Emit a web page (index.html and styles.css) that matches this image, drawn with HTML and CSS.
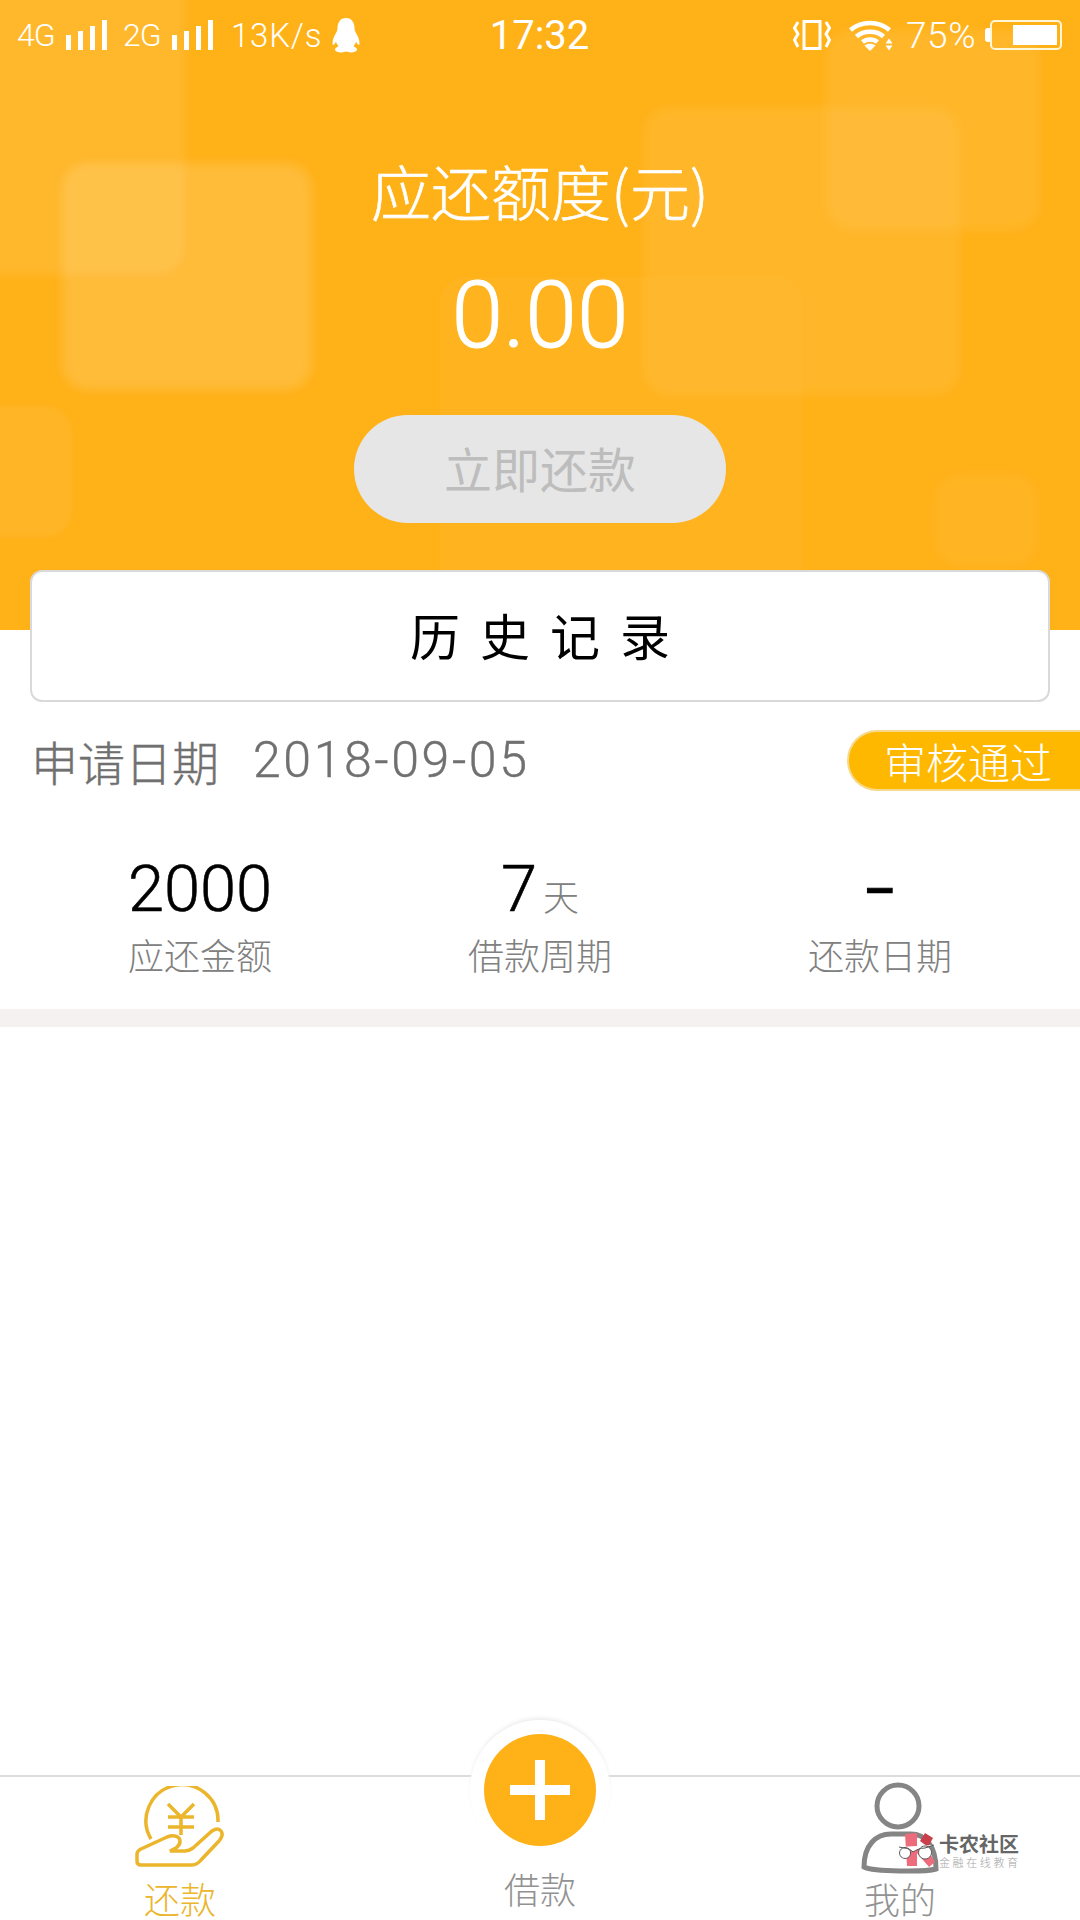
FILE: index.html
```html
<!DOCTYPE html>
<html lang="zh-CN">
<head>
<meta charset="utf-8">
<title>还款</title>
<link rel="stylesheet" href="styles.css">
</head>
<body>
<main class="app">
  <header class="hero">
    <div class="blocks" aria-hidden="true">
      <i class="block block-a"></i><i class="block block-b"></i><i class="block block-c"></i>
      <i class="block block-d"></i><i class="block block-e"></i><i class="block block-f"></i><i class="block block-g"></i>
    </div>
    <div class="status">
      <div class="status-left">
        <span class="net">4G</span>
        <svg class="bars" viewBox="0 0 42 30"><path d="M1 15h5v15H1zM13 11h5v19h-5zM25 6h5v24h-5zM37 0h5v30h-5z"/></svg>
        <span class="net net-2">2G</span>
        <svg class="bars" viewBox="0 0 42 30"><path d="M1 15h5v15H1zM13 11h5v19h-5zM25 6h5v24h-5zM37 0h5v30h-5z"/></svg>
        <span class="speed">13K/s</span>
        <svg class="penguin" viewBox="0 0 28 35"><path d="M14 0c6 0 8.500 5 8.500 10 0 2 .5 3 1.500 5 2 3 3.500 7 3.500 10.500 0 1.500-1 2-2.500 0l-1-2c-.5 2-1.500 3.500-2.500 5 2 .5 3.500 1.500 3.500 3 0 2-3.500 3-6 3-2.500 0-3.500-1-5-1s-2.500 1-5 1c-2.500 0-6-1-6-3 0-1.500 1.500-2.500 3.500-3-1-1.500-2-3-2.500-5l-1 2c-1.500 2-2.500 1.500-2.500 0C.5 22 2 18 4 15c1-2 1.500-3 1.500-5C5.500 5 8 0 14 0z"/></svg>
      </div>
      <div class="clock">17:32</div>
      <div class="status-right">
        <svg class="vibrate" viewBox="0 0 38 30" fill="none"><rect x="11" y="1.500" width="16" height="27"/><path d="M5 2 1.500 8 5 14 1.500 20 5 27M33 2l3.500 6L33 14l3.500 6L33 27"/></svg>
        <svg class="wifi" viewBox="0 0 47 32"><path class="arc" d="M1.500 11C12 1.500 30 1.500 40.500 11M7.500 17.500c7-6.500 20-6.500 27 0M13.500 23c4-3.500 11-3.500 15 0"/><path d="m21 32-5.500-5.500c3-2.500 8-2.500 11 0zM40 19.500l3.500 5h-7zM36.500 26.500h7l-3.500 5z"/></svg>
        <span class="pct">75%</span>
        <div class="battery"><i class="battery-nub"></i><div class="battery-body"><i class="battery-fill"></i></div></div>
      </div>
    </div>
    <h1 class="hero-title">应还额度(元)</h1>
    <div class="hero-amount">0.00</div>
    <button class="pay" type="button">立即还款</button>
  </header>

  <button class="history" type="button">历史记录</button>

  <section class="record">
    <div class="record-head">
      <div class="apply"><span>申请日期</span><span class="apply-date">2018-09-05</span></div>
      <div class="badge">审核通过</div>
    </div>
    <div class="stats">
      <div class="stat"><div class="stat-value">2000</div><div class="stat-label">应还金额</div></div>
      <div class="stat"><div class="stat-value">7<small>天</small></div><div class="stat-label">借款周期</div></div>
      <div class="stat"><div class="stat-value stat-dash">-</div><div class="stat-label">还款日期</div></div>
    </div>
  </section>
  <div class="divider"></div>

  <nav class="tabs">
    <div class="tab tab-active">
      <svg class="tab-icon" viewBox="0 0 90 82" fill="none"><path d="M83 36A36 36 0 1 0 16 53M33 18l13 13 13-13M33 31h26M33 41h26M46 31v18"/><path d="M2 75v-7q0-3 4-5l26-12q8-3 12 1 3 5-3 10l-6 3h15q4 0 8-3l19-17q6-4 9 0 3 4-2 10L66 74q-4 5-9 5H6q-4 0-4-4z"/></svg>
      <div class="tab-label">还款</div>
    </div>
    <div class="tab tab-center">
      <div class="fab"><i class="fab-h"></i><i class="fab-v"></i></div>
      <div class="tab-label">借款</div>
    </div>
    <div class="tab tab-me">
      <svg class="tab-icon person" viewBox="0 0 78 92" fill="none"><circle cx="37" cy="24" r="21"/><path d="M3 85c0-22 12-33 27-33h20c14 0 25 12 25 35-10 3-62 3-72-2z"/></svg>
      <div class="tab-label">我的</div>
      <div class="mark">
        <svg class="mark-logo" viewBox="0 0 38 36"><path class="mark-pink" d="M6 1l12-1v33l-10 0zM18 14h9l9 15-6 5-12-14z"/><path class="mark-red" d="M21 8 26 0l8 5-5 9z"/><path class="mark-glass" d="M0 14l5 1c4 0 7 2 9 4 3-2 7-4 12-4l9-3M6 14.500a5.500 5.500 0 1 0 .1 0zM26 13a6.500 6.500 0 1 0 .1 0z"/></svg>
        <div class="mark-text"><div class="mark-name">卡农社区</div><div class="mark-sub">金融在线教育</div></div>
      </div>
    </div>
  </nav>
</main>
</body>
</html>
```
FILE: styles.css
```css
* { box-sizing: border-box; }
html, body { margin: 0; padding: 0; background: #fff; }
body { font-family: "Noto Sans CJK SC", "Noto Sans", sans-serif; }
.app { width: 1080px; height: 1920px; display: flex; flex-direction: column; overflow: hidden; background: #fff; }

.hero { position: relative; height: 630px; background: #ffb118; color: #fff; display: flex; flex-direction: column; align-items: center; flex: none; }
.blocks { position: absolute; inset: 0; overflow: hidden; }
.block { position: absolute; display: block; background: rgba(255,255,255,.1); filter: blur(5px); border-radius: 26px; }
.block-a { left: -30px; top: -30px; width: 215px; height: 305px; background: rgba(255,255,255,.09); }
.block-b { left: 62px; top: 163px; width: 250px; height: 227px; background: rgba(255,255,255,.14); }
.block-c { left: 644px; top: 107px; width: 316px; height: 288px; background: rgba(255,255,255,.07); }
.block-d { left: 826px; top: 30px; width: 214px; height: 200px; background: rgba(255,255,255,.07); }
.block-e { left: 440px; top: 277px; width: 362px; height: 380px; background: rgba(255,255,255,.03); filter: none; }
.block-f { left: -30px; top: 406px; width: 102px; height: 131px; background: rgba(255,255,255,.06); filter: blur(2px); }
.block-g { left: 935px; top: 474px; width: 102px; height: 92px; background: rgba(255,255,255,.05); filter: blur(6px); }

.status { position: relative; width: 100%; height: 70px; padding: 0 18px 0 17px; display: grid; grid-template-columns: 1fr auto 1fr; align-items: center; font-family: Roboto, sans-serif; flex: none; }
.status-left, .status-right { display: flex; align-items: center; }
.status-right { justify-content: flex-end; }
.net { font-size: 32px; width: 40px; letter-spacing: -1px; font-weight: 300; margin-right: 8px; }
.net-2 { margin-left: 16px; margin-right: 8px; }
.bars { width: 42px; height: 30px; fill: #fff; }
.speed { font-size: 33px; font-weight: 300; margin-left: 18px; letter-spacing: .8px; }
.penguin { width: 28px; height: 35px; fill: #fff; margin-left: 10px; }
.clock { font-size: 40px; font-weight: 400; }
.vibrate { width: 38px; height: 30px; stroke: #fff; stroke-width: 3; }
.wifi { width: 47px; height: 32px; margin-left: 18px; fill: #fff; }
.wifi .arc { fill: none; stroke: #fff; stroke-width: 4.500; }
.pct { font-size: 37px; font-weight: 300; margin-left: 10px; letter-spacing: .5px; }
.battery { display: flex; align-items: center; margin-left: 9px; }
.battery-nub { display: block; width: 5px; height: 14px; background: #fff; border-radius: 3px 0 0 3px; }
.battery-body { width: 72px; height: 30px; border: 2px solid #fff6d8; border-radius: 5px; padding: 3px 3px 3px 21px; }
.battery-fill { display: block; height: 100%; background: #fff; }

.hero-title { position: relative; margin: 85px 0 0; font-size: 60px; font-weight: 300; -webkit-text-stroke: .6px #fff; line-height: 70px; }
.hero-amount { position: relative; margin-top: 41px; font-family: Roboto, sans-serif; font-weight: 300; -webkit-text-stroke: 1px #fff; font-size: 93px; line-height: 100px; }
.pay { position: relative; margin-top: 49px; width: 372px; height: 108px; border: 0; border-radius: 54px; background: #e6e6e6; color: #bdbdbd; font-family: inherit; font-size: 48px; padding: 0 0 4px; }

.history { position: relative; flex: none; margin: -60px 30px 0; height: 132px; border: 2px solid #d9d9d9; border-radius: 12px; background: #fff; color: #000; font-family: inherit; font-size: 50px; letter-spacing: 20px; padding: 0 0 4px 20px; }

.record { flex: none; }
.record-head { display: flex; justify-content: space-between; align-items: center; margin-top: 28px; height: 61px; padding-left: 31px; }
.apply { display: flex; gap: 34px; font-size: 47px; line-height: 61px; color: #707070; font-weight: 300; -webkit-text-stroke: .4px #707070; }
.apply-date { font-family: Roboto, sans-serif; font-weight: 300; font-size: 50px; letter-spacing: 2.600px; }
.badge { width: 233px; height: 61px; padding-left: 35px; background: #ffb800; border: 2px solid #f6d98a; border-right: 0; border-radius: 30px 0 0 30px; color: #fff; font-size: 42px; line-height: 57px; font-weight: 300; white-space: nowrap; }
.stats { display: grid; grid-template-columns: repeat(3, 340px); padding: 0 30px; margin-top: 60px; }
.stat { display: flex; flex-direction: column; align-items: center; }
.stat-value { font-family: Roboto, sans-serif; font-weight: 300; -webkit-text-stroke: .6px #000; font-size: 65px; line-height: 76px; height: 76px; color: #000; }
.stat-value small { font-family: "Noto Sans CJK SC", sans-serif; font-size: 36px; line-height: 1; color: #808080; margin-left: 6px; font-weight: 300; -webkit-text-stroke: 0; }
.stat-dash { font-weight: 400; transform: translateY(-1px) scaleX(1.6); }
.stat-label { margin-top: 2px; font-size: 36px; line-height: 50px; color: #808080; font-weight: 300; }
.divider { flex: none; height: 18px; margin-top: 30px; background: #f5f1f0; }

.tabs { margin-top: auto; flex: none; height: 145px; border-top: 2px solid #dcdcdc; display: grid; grid-template-columns: repeat(3, 1fr); position: relative; }
.tab { position: relative; display: flex; flex-direction: column; align-items: center; font-size: 36px; line-height: 36px; color: #929292; font-weight: 300; }
.tab-active { color: #ebb52c; padding-top: 9px; }
.tab-active .tab-label { margin-top: 12px; }
.tab-icon { width: 90px; height: 82px; stroke: #ebb52c; stroke-width: 3.500; }
.tab-center { padding-top: 93px; }
.tab-me { padding-top: 5px; }
.tab-me .tab-label { margin-top: 6px; }
.person { width: 78px; height: 92px; stroke: #858585; stroke-width: 5; filter: blur(.6px); }
.fab { position: absolute; left: 124px; top: -43px; width: 112px; height: 112px; border-radius: 50%; background: #ffb118; box-shadow: 0 0 0 14px #fff, 0 -3px 4px 13px #ececec; }
.fab-h { position: absolute; left: 26px; top: 51px; width: 60px; height: 10px; background: #fff; }
.fab-v { position: absolute; left: 51px; top: 26px; width: 10px; height: 60px; background: #fff; }

.mark { position: absolute; left: 179px; top: 56px; display: flex; align-items: center; gap: 2px; }
.mark-logo { width: 38px; height: 36px; }
.mark-pink { fill: #ee6b7c; }
.mark-red { fill: #c9404c; }
.mark-glass { fill: #fff; stroke: #555; stroke-width: 1; }
.mark-text { display: flex; flex-direction: column; width: 80px; }
.mark-name { font-size: 20px; line-height: 22px; color: #666; font-weight: 700; }
.mark-sub { font-size: 11px; line-height: 14px; color: #a5a5a5; letter-spacing: 2.600px; white-space: nowrap; }
```
